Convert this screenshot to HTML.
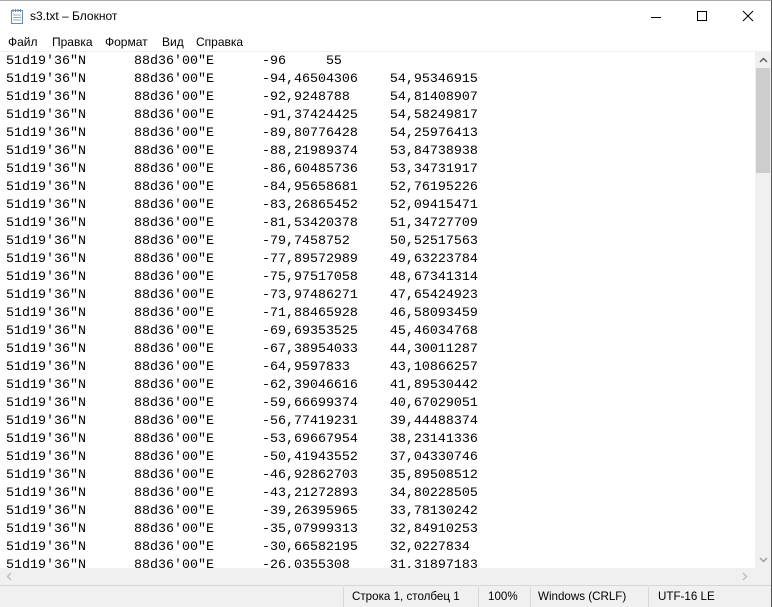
<!DOCTYPE html>
<html><head><meta charset="utf-8"><style>
*{margin:0;padding:0;box-sizing:border-box}
body{width:772px;height:607px;overflow:hidden;background:#fff;font-family:"Segoe UI","Liberation Sans","DejaVu Sans",sans-serif;position:relative}
.win{position:absolute;left:0;top:0;width:772px;height:607px;border-right:1px solid #555;border-bottom:1px solid #555;border-top:1px solid #aaa}
.title{position:absolute;left:0;top:0;width:771px;height:30px;font-size:12px;color:#000}
.title .t{position:absolute;left:30px;top:8px}
.menu{position:absolute;left:0;top:30px;height:20px;font-size:12px}
.menu span{position:absolute;top:4px;white-space:nowrap}
.text{position:absolute;left:0;top:50px;width:755px;height:517px;overflow:hidden;border-top:1px solid #f0f0f0}
pre{font-family:"Liberation Mono",monospace;font-size:13.33px;line-height:18px;tab-size:8;-moz-tab-size:8;position:absolute;left:6px;top:1px;color:#000}
.vs{position:absolute;left:755px;top:50px;width:16px;height:517px;background:#f0f0f0}
.hs{position:absolute;left:0;top:567px;width:755px;height:17px;background:#f0f0f0}
.corner{position:absolute;left:755px;top:567px;width:16px;height:17px;background:#f0f0f0}
.status{position:absolute;left:0;top:584px;width:771px;height:22px;background:#f0f0f0;border-top:1px solid #d7d7d7;font-size:11.6px}
.status span{position:absolute;top:4px;white-space:nowrap}
.sep{position:absolute;top:1px;width:1px;height:20px;background:#d7d7d7}
</style></head><body>
<div class="win">
<div class="title">
<svg style="position:absolute;left:9px;top:7px" width="16" height="17"><rect x="2.5" y="2.5" width="11" height="13" fill="#fff" stroke="#6b8bb0"/><path d="M4 1v3M6.5 1v3M9 1v3M11.5 1v3" stroke="#6b8bb0"/><path d="M4 7h8M4 9.5h8M4 12h8" stroke="#9ab"/></svg>
<span class="t">s3.txt – Блокнот</span>
<svg style="position:absolute;left:650px;top:10px" width="12" height="12"><path d="M1 6.5h10" stroke="#000"/></svg>
<svg style="position:absolute;left:696px;top:9px" width="12" height="12"><rect x="1.5" y="1.5" width="9" height="9" fill="none" stroke="#000"/></svg>
<svg style="position:absolute;left:742px;top:9px" width="12" height="12"><path d="M1 1l10 10M11 1L1 11" stroke="#000"/></svg>
</div>
<div class="menu"><span style="left:8px">Файл</span><span style="left:52px">Правка</span><span style="left:105px">Формат</span><span style="left:162px">Вид</span><span style="left:196px">Справка</span></div>
<div class="text"><pre>51d19'36"N	88d36'00"E	-96	55
51d19'36"N	88d36'00"E	-94,46504306	54,95346915
51d19'36"N	88d36'00"E	-92,9248788	54,81408907
51d19'36"N	88d36'00"E	-91,37424425	54,58249817
51d19'36"N	88d36'00"E	-89,80776428	54,25976413
51d19'36"N	88d36'00"E	-88,21989374	53,84738938
51d19'36"N	88d36'00"E	-86,60485736	53,34731917
51d19'36"N	88d36'00"E	-84,95658681	52,76195226
51d19'36"N	88d36'00"E	-83,26865452	52,09415471
51d19'36"N	88d36'00"E	-81,53420378	51,34727709
51d19'36"N	88d36'00"E	-79,7458752	50,52517563
51d19'36"N	88d36'00"E	-77,89572989	49,63223784
51d19'36"N	88d36'00"E	-75,97517058	48,67341314
51d19'36"N	88d36'00"E	-73,97486271	47,65424923
51d19'36"N	88d36'00"E	-71,88465928	46,58093459
51d19'36"N	88d36'00"E	-69,69353525	45,46034768
51d19'36"N	88d36'00"E	-67,38954033	44,30011287
51d19'36"N	88d36'00"E	-64,9597833	43,10866257
51d19'36"N	88d36'00"E	-62,39046616	41,89530442
51d19'36"N	88d36'00"E	-59,66699374	40,67029051
51d19'36"N	88d36'00"E	-56,77419231	39,44488374
51d19'36"N	88d36'00"E	-53,69667954	38,23141336
51d19'36"N	88d36'00"E	-50,41943552	37,04330746
51d19'36"N	88d36'00"E	-46,92862703	35,89508512
51d19'36"N	88d36'00"E	-43,21272893	34,80228505
51d19'36"N	88d36'00"E	-39,26395965	33,78130242
51d19'36"N	88d36'00"E	-35,07999313	32,84910253
51d19'36"N	88d36'00"E	-30,66582195	32,0227834
51d19'36"N	88d36'00"E	-26,0355308	31,31897183</pre></div>
<div class="vs">
<svg style="position:absolute;left:4px;top:6px" width="9" height="6"><path d="M1 5l3.5-3.5L8 5" stroke="#606060" stroke-width="1.5" fill="none"/></svg>
<div style="position:absolute;left:1px;top:17px;width:14px;height:105px;background:#cdcdcd"></div>
<svg style="position:absolute;left:4px;top:506px" width="9" height="6"><path d="M1 1l3.5 3.5L8 1" stroke="#a0a0a0" stroke-width="1.5" fill="none"/></svg>
</div>
<div class="hs">
<svg style="position:absolute;left:6px;top:4px" width="6" height="9"><path d="M5 1L1.5 4.5 5 8" stroke="#c0c0c0" stroke-width="1.5" fill="none"/></svg>
<svg style="position:absolute;left:742px;top:4px" width="6" height="9"><path d="M1 1l3.5 3.5L1 8" stroke="#c0c0c0" stroke-width="1.5" fill="none"/></svg>
</div>
<div class="corner"></div>
<div class="status">
<div class="sep" style="left:343px"></div><div class="sep" style="left:478px"></div><div class="sep" style="left:530px"></div><div class="sep" style="left:648px"></div>
<span style="left:352px">Строка 1, столбец 1</span><span style="left:488px">100%</span><span style="left:538px">Windows (CRLF)</span><span style="left:658px">UTF-16 LE</span>
</div>
</div>
</body></html>
